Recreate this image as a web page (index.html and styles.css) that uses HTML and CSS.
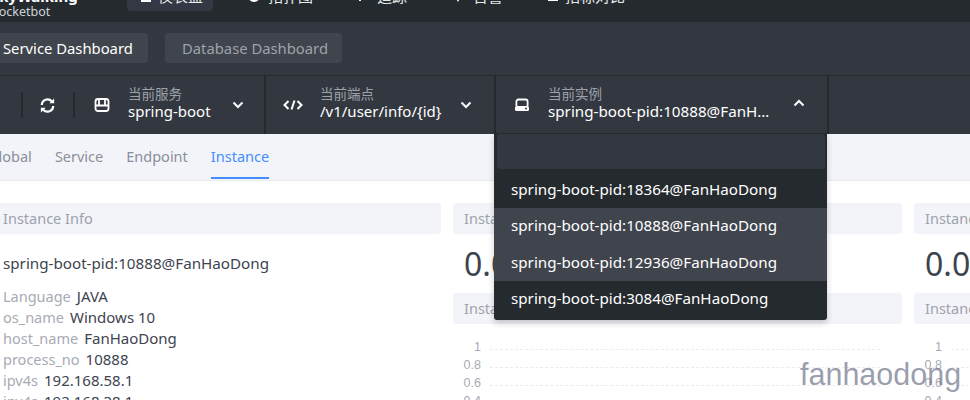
FILE: index.html
```html
<!DOCTYPE html>
<html lang="zh">
<head>
<meta charset="utf-8">
<title>SkyWalking Dashboard</title>
<link rel="stylesheet" href="styles.css">
</head>
<body>
<div class="page">
  <header class="nav">
    <div class="brand">
      <div class="brand-name">SkyWalking</div>
      <div class="brand-sub">Rocketbot</div>
    </div>
    <nav class="nav-items">
      <a class="nav-item nav-active"><svg class="nav-ico" viewBox="0 0 12 12"><rect x="1" y="0" width="10" height="12" fill="#fff"/></svg>仪表盘</a>
      <a class="nav-item nav-topo"><svg class="nav-ico" viewBox="0 0 12 12"><circle cx="6" cy="6" r="5" fill="none" stroke="#fff" stroke-width="2"/></svg>拓扑图</a>
      <a class="nav-item nav-trace"><svg class="nav-ico" viewBox="0 0 12 12"><path d="M6 0v11" stroke="#fff" stroke-width="2"/></svg>追踪</a>
      <a class="nav-item nav-alarm"><svg class="nav-ico" viewBox="0 0 12 12"><path d="M1 3h10L6 12z" fill="#fff"/></svg>告警</a>
      <a class="nav-item nav-comp"><svg class="nav-ico" viewBox="0 0 12 12"><rect x="1" y="0" width="10" height="11" fill="#fff"/></svg>指标对比</a>
    </nav>
  </header>

  <div class="dash-tabs">
    <button class="dash-btn dash-btn-on">Service Dashboard</button>
    <button class="dash-btn">Database Dashboard</button>
  </div>

  <div class="tools">
    <div class="tool-actions">
      <span class="tool-act-first"><svg class="ico" viewBox="0 0 16 16"><circle cx="8" cy="8" r="6" fill="none" stroke="#8f949c" stroke-width="2"/></svg></span>
      <span class="tool-act">
        <svg class="ico-reload" viewBox="0 0 18 18" fill="none" stroke="#fff" stroke-width="2.4"><path d="M3 8.5A6 6 0 0 1 13.5 4.6"/><path d="M15 9.5A6 6 0 0 1 4.5 13.4"/><path d="M11 6.6h5V1.6z" fill="#fff" stroke="none"/><path d="M7 11.4H2v5z" fill="#fff" stroke="none"/></svg>
      </span>
    </div>
    <div class="tool-seg seg-service">
      <svg class="seg-ico" viewBox="0 0 16 16" fill="none" stroke="#fff" stroke-width="1.8"><rect x="1.5" y="2" width="13" height="12" rx="2.5"/><path d="M1.5 8.5h13M5 2v6.5M11 2v6.5"/></svg>
      <div class="seg-text"><span class="seg-label">当前服务</span><span class="seg-value">spring-boot</span></div>
      <svg class="chev" viewBox="0 0 12 8"><path d="M1.5 1.5 6 6l4.5-4.5" fill="none" stroke="#fff" stroke-width="2"/></svg>
    </div>
    <div class="tool-seg seg-endpoint">
      <svg class="seg-ico" viewBox="0 0 20 12" fill="none" stroke="#fff" stroke-width="2"><path d="M5.5 2 1.5 6l4 4M14.5 2l4 4-4 4M11.5 1.5l-3 9"/></svg>
      <div class="seg-text"><span class="seg-label">当前端点</span><span class="seg-value">/v1/user/info/{id}</span></div>
      <svg class="chev" viewBox="0 0 12 8"><path d="M1.5 1.5 6 6l4.5-4.5" fill="none" stroke="#fff" stroke-width="2"/></svg>
    </div>
    <div class="tool-seg seg-instance">
      <svg class="seg-ico" viewBox="0 0 16 16" fill="none"><path d="M2.4 9V4.5a2 2 0 0 1 2-2h7.2a2 2 0 0 1 2 2V9" stroke="#fff" stroke-width="1.8"/><rect x="1" y="9" width="14" height="5" rx="1.5" fill="#fff"/><circle cx="12" cy="11.5" r="1" fill="#333840"/></svg>
      <div class="seg-text seg-text-wide"><span class="seg-label">当前实例</span><span class="seg-value seg-ellipsis">spring-boot-pid:10888@FanHaoDong</span></div>
      <svg class="chev" viewBox="0 0 12 8"><path d="M1.5 6.5 6 2l4.5 4.5" fill="none" stroke="#fff" stroke-width="2"/></svg>
    </div>
  </div>

  <div class="sub-tabs">
    <a class="sub-tab">Global</a>
    <a class="sub-tab">Service</a>
    <a class="sub-tab">Endpoint</a>
    <a class="sub-tab sub-tab-on">Instance</a>
  </div>

  <main class="grid">
    <section class="col col-info">
      <h3 class="card-title">Instance Info</h3>
      <div class="info-name">spring-boot-pid:10888@FanHaoDong</div>
      <dl class="info-list">
        <div class="info-row"><dt>Language</dt><dd>JAVA</dd></div>
        <div class="info-row"><dt>os_name</dt><dd>Windows 10</dd></div>
        <div class="info-row"><dt>host_name</dt><dd>FanHaoDong</dd></div>
        <div class="info-row"><dt>process_no</dt><dd>10888</dd></div>
        <div class="info-row"><dt>ipv4s</dt><dd>192.168.58.1</dd></div>
        <div class="info-row"><dt>ipv4s</dt><dd>192.168.38.1</dd></div>
      </dl>
    </section>
    <section class="col col-mid">
      <h3 class="card-title">Instance Throughput</h3>
      <div class="big-num">0.00 cpm</div>
      <h3 class="card-title">Instance Response Time</h3>
      <div class="chart">
        <div class="chart-row"><span>1</span><i></i></div>
        <div class="chart-row"><span>0.8</span><i></i></div>
        <div class="chart-row"><span>0.6</span><i></i></div>
        <div class="chart-row"><span>0.4</span><i></i></div>
      </div>
    </section>
    <section class="col col-right">
      <h3 class="card-title">Instance Avg</h3>
      <div class="big-num">0.00 ms</div>
      <h3 class="card-title">Instance SLA</h3>
      <div class="chart">
        <div class="chart-row"><span>1</span><i></i></div>
        <div class="chart-row"><span>0.8</span><i></i></div>
        <div class="chart-row"><span>0.6</span><i></i></div>
        <div class="chart-row"><span>0.4</span><i></i></div>
      </div>
    </section>
  </main>

  <div class="dropdown">
    <input class="dd-search" type="text" aria-label="search">
    <div class="dd-item">spring-boot-pid:18364@FanHaoDong</div>
    <div class="dd-item dd-item-hi">spring-boot-pid:10888@FanHaoDong</div>
    <div class="dd-item dd-item-hi">spring-boot-pid:12936@FanHaoDong</div>
    <div class="dd-item">spring-boot-pid:3084@FanHaoDong</div>
  </div>

  <div class="watermark">fanhaodong</div>
</div>
</body>
</html>
```
FILE: styles.css
```css
* { box-sizing: border-box; }
html, body { margin: 0; height: 100%; overflow: hidden; background: #fff; }
.page {
  position: relative;
  width: 970px;
  height: 400px;
  overflow: hidden;
  font-family: "Noto Sans", "Noto Sans CJK SC", sans-serif;
  font-size: 14px;
  color: #3d444f;
}
.nav {
  height: 22px;
  background: #252a2f;
  display: flex;
  color: #fff;
}
.brand { width: 136px; margin-left: -9px; margin-top: -13px; flex: none; }
.brand-name { font-size: 15px; font-weight: 700; line-height: 18px; height: 18px; }
.brand-sub { font-size: 12.5px; line-height: 13px; color: #cfd2d6; }
.nav-items { display: flex; align-items: flex-start; }
.nav-item {
  display: flex;
  align-items: flex-start;
  gap: 8px;
  height: 25px;
  padding: 0 13px;
  margin-top: -14px;
  font-size: 15px;
  line-height: 20px;
  color: #e8eaec;
  white-space: nowrap;
  flex: none;
}
.nav-ico { width: 12px; height: 12px; flex: none; margin-top: 4px; }
.nav-active { background: #333844; border-radius: 4px; width: 86px; gap: 6px; }
.nav-topo { margin-left: 22px; }
.nav-trace { margin-left: 15px; gap: 11px; }
.nav-alarm { margin-left: 19px; gap: 9px; }
.nav-comp { margin-left: 18px; gap: 6px; }
.dash-tabs {
  height: 53px;
  background: #333840;
  display: flex;
  align-items: center;
  gap: 17px;
  padding-bottom: 1px;
  margin-left: -22px;
}
.dash-btn {
  height: 30px;
  border: 0;
  border-radius: 4px;
  background: #3f444d;
  padding: 0 14px 0 17px;
  font: inherit;
  font-size: 14.8px;
  color: #9ea3ab;
  white-space: nowrap;
}
.dash-btn-on { color: #fff; width: 170px; padding: 0 14px 0 25px; text-align: left; }
.tools {
  height: 59px;
  background: #333840;
  border-top: 1px solid #252a2f;
  display: flex;
  margin-left: -15px;
}
.tool-actions { width: 98px; display: flex; align-items: center; flex: none; }
.tool-act-first { display: flex; width: 16px; flex: none; }
.tool-act {
  display: flex;
  align-items: center;
  justify-content: center;
  height: 26px;
  width: 54px;
  border-right: 2px solid #252a2f;
  border-left: 2px solid #252a2f;
  margin-left: 20px;
  flex: none;
}
.ico { width: 16px; height: 16px; }
.ico-reload { width: 17px; height: 17px; margin-right: 1px; }
.tool-seg { display: flex; align-items: center; flex: none; color: #fff; border-right: 2px solid #252a2f; }
.seg-service { width: 183px; padding-left: 11px; }
.seg-endpoint { width: 230px; padding-left: 17px; }
.seg-instance { width: 333px; padding-left: 18px; }
.seg-ico { width: 16px; height: 16px; flex: none; }
.seg-endpoint .seg-ico { width: 20px; height: 12px; }
.seg-text { display: flex; flex-direction: column; margin-left: 18px; flex: none; margin-top: -2px; }
.seg-service .seg-text { width: 97px; }
.seg-endpoint .seg-text { width: 133px; margin-left: 17px; }
.seg-text-wide { width: 225px; }
.seg-label { font-size: 13.5px; line-height: 14px; color: #9da2aa; }
.seg-value { font-size: 15px; line-height: 20px; white-space: nowrap; }
.seg-instance .seg-value { font-size: 15.2px; }
.seg-ellipsis { overflow: hidden; text-overflow: ellipsis; }
.chev { width: 12px; height: 8px; margin-left: 7px; flex: none; }
.seg-instance .chev { margin-top: -4px; margin-left: 20px; }
.sub-tabs {
  height: 47px;
  background: #f3f4f9;
  border-bottom: 1px solid #e8e9ee;
  display: flex;
  gap: 23px;
  margin-left: -12px;
  font-size: 14.5px;
  color: #8a8f9a;
}
.sub-tab { height: 45px; line-height: 44px; padding: 0; }
.sub-tab-on { color: #448dfe; border-bottom: 2px solid #448dfe; }
.grid {
  display: grid;
  grid-template-columns: 449px 449px 449px;
  column-gap: 12px;
  margin-left: -8px;
  padding-top: 22px;
}
.card-title {
  margin: 0;
  height: 31px;
  line-height: 31px;
  padding-left: 11px;
  background: #f3f4f9;
  border-radius: 3px;
  font-size: 14.5px;
  font-weight: 400;
  color: #9da2ad;
  white-space: nowrap;
  overflow: hidden;
}
.info-name { margin-top: 17px; padding-left: 11px; font-size: 15.2px; line-height: 24px; color: #3d444f; }
.info-list { margin: 11px 0 0; padding-left: 11px; font-size: 14.5px; }
.info-row { display: flex; gap: 6px; height: 21px; line-height: 21px; }
.info-row dt { color: #a7abb5; }
.info-row dd { margin: 0; color: #3d444f; font-size: 15px; }
.big-num { height: 59px; padding-left: 11px; font-size: 32px; line-height: 59px; color: #3d444f; white-space: nowrap; }
.chart { padding-top: 14px; }
.chart-row { display: flex; align-items: center; height: 18px; font-family: "Liberation Sans", sans-serif; font-size: 12.5px; color: #a7abb5; }
.chart-row span { width: 28px; text-align: right; flex: none; }
.chart-row i { display: block; width: 390px; margin: 4px 0 0 9px; border-top: 1px dashed #ececf0; }
.dropdown {
  position: absolute;
  left: 494px;
  top: 133px;
  width: 333px;
  height: 187px;
  background: #252a2f;
  border-radius: 0 0 3px 3px;
  box-shadow: 0 3px 6px rgba(0, 0, 0, .2);
  padding: 1px 2px 0 3px;
}
.dd-search {
  display: block;
  width: 328px;
  height: 35px;
  border: 0;
  outline: 0;
  border-radius: 3px;
  background: #333840;
  margin-bottom: 2.5px;
}
.dd-item {
  height: 36.5px;
  margin: 0 -2px 0 -3px;
  padding-left: 17px;
  line-height: 35px;
  font-size: 15.2px;
  color: #fff;
  white-space: nowrap;
}
.dd-item-hi { background: #3f444d; }
.watermark {
  position: absolute;
  left: 800px;
  top: 354px;
  font-family: "Liberation Sans", sans-serif;
  font-size: 30.5px;
  line-height: 40px;
  color: rgba(110, 114, 135, .7);
  white-space: nowrap;
}
```
